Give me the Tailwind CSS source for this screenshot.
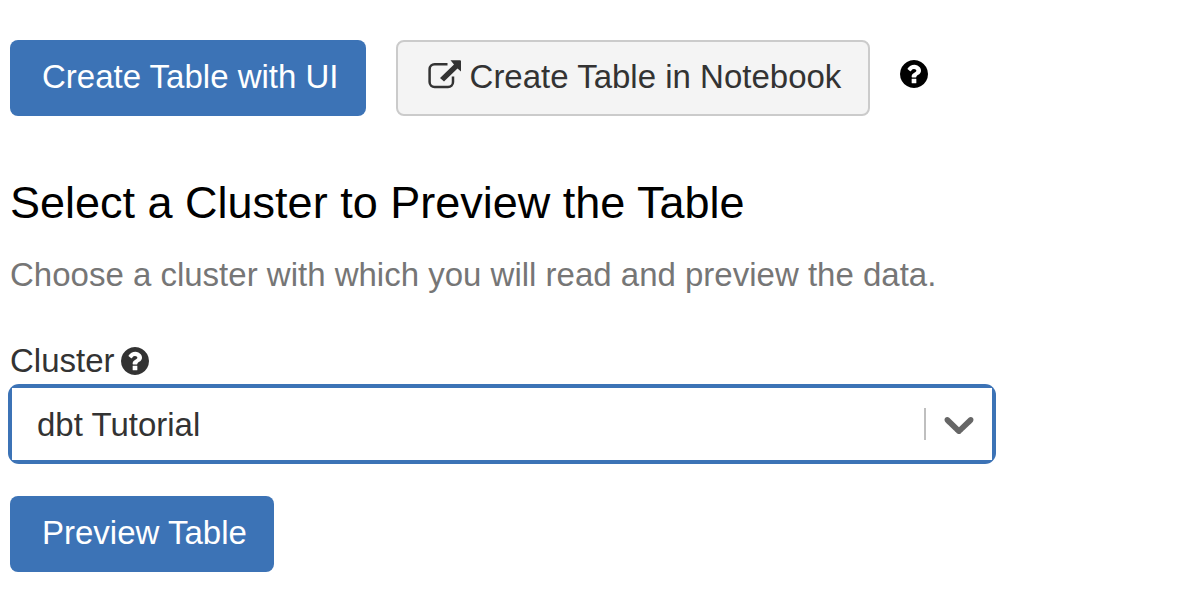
<!DOCTYPE html>
<html lang="en">
<head>
<meta charset="utf-8">
<meta name="viewport" content="width=device-width, initial-scale=1">
<title>Create Table</title>
<script src="https://cdn.jsdelivr.net/npm/@tailwindcss/browser@4"></script>
</head>
<body class="bg-white px-[10px] pt-10 font-['Liberation_Sans',Arial,sans-serif] text-[33px] leading-10 text-[#333333]">
<svg class="hidden" aria-hidden="true">
  <symbol id="question" viewBox="128 128 1536 1536"><path fill="currentColor" d="M1024 1376v-192q0-14-9-23t-23-9h-192q-14 0-23 9t-9 23v192q0 14 9 23t23 9h192q14 0 23-9t9-23zm256-672q0-88-55.500-163t-138.500-116-170-41q-243 0-371 213-15 24 8 42l132 100q7 6 19 6 16 0 25-12 53-68 86-92 34-24 86-24 48 0 85.500 26t37.500 59q0 38-20 61t-68 45q-63 28-115.500 86.500t-52.500 125.500v36q0 14 9 23t23 9h192q14 0 23-9t9-23q0-19 21.500-49.500t54.500-49.500q32-18 49-28.500t46-35 44.500-48 28-60.500 12.500-81zm384 192q0 209-103 385.500t-279.500 279.500-385.500 103-385.500-103-279.500-279.500-103-385.500 103-385.500 279.500-279.500 385.500-103 385.500 103 279.500 279.500 103 385.500z"/></symbol>
</svg>
<main>
  <div class="flex flex-wrap items-center gap-[30px]">
    <button type="button" class="rounded-lg bg-[#3c73b6] pt-[17px] pr-[27px] pb-[19px] pl-8 text-white">Create Table with UI</button>
    <button type="button" class="flex items-center gap-2 rounded-lg border-2 border-[#cbcbcb] bg-[#f4f4f4] pt-[15px] pr-[27px] pb-[17px] pl-[30px]">
      <svg class="mb-1 h-[30px] w-[34px]" viewBox="0 0 34 30" fill="none" aria-hidden="true">
        <path d="M19.500 4.200H6.600a5 5 0 0 0-5 5V22a5 5 0 0 0 5 5H20a5 5 0 0 0 5-5v-5.500" stroke="currentColor" stroke-width="2.500"/>
        <path d="M22.500 0.300H32q1 0 1 1V11.500L29.500 8.500L16 21.500L12 18L26 4.500Z" fill="currentColor"/>
      </svg>
      Create Table in Notebook
    </button>
    <button type="button" aria-label="Help" class="pb-2 text-black"><svg class="h-7 w-7" aria-hidden="true"><use href="#question"/></svg></button>
  </div>
  <h1 class="mt-[59px] text-[45px] leading-[56px] text-black">Select a Cluster to Preview the Table</h1>
  <p class="mt-6 text-[#767676]">Choose a cluster with which you will read and preview the data.</p>
  <div class="mt-[46px] flex items-center gap-[6px]">
    <label for="cluster">Cluster</label>
    <svg class="h-7 w-7" aria-hidden="true"><use href="#question"/></svg>
  </div>
  <div class="relative -mx-[2px] mt-[3px] max-w-[988px] rounded-[11px] bg-[#3c73b6] p-1">
    <select id="cluster" class="block h-[72px] w-full appearance-none bg-white pt-[2px] pr-20 pl-[25px] outline-none"><option>dbt Tutorial</option></select>
    <div class="pointer-events-none absolute inset-y-0 right-3 flex items-center gap-2">
      <span class="h-8 w-[2px] bg-[#bfbfbf]"></span>
      <svg class="h-[50px] w-[50px] fill-[#666666]" viewBox="0 0 20 20" aria-hidden="true"><path d="M4.516 7.548c0.436-0.446 1.043-0.481 1.576 0l3.908 3.747 3.908-3.747c0.533-0.481 1.141-0.446 1.574 0 0.436 0.445 0.408 1.197 0 1.615-0.406 0.418-4.695 4.502-4.695 4.502-0.217 0.223-0.502 0.335-0.787 0.335s-0.570-0.112-0.789-0.335c0 0-4.287-4.084-4.695-4.502s-0.436-1.170 0-1.615z"/></svg>
    </div>
  </div>
  <button type="button" class="mt-8 rounded-lg bg-[#3c73b6] pt-[17px] pr-[27px] pb-[19px] pl-8 text-white">Preview Table</button>
</main>
</body>
</html>
